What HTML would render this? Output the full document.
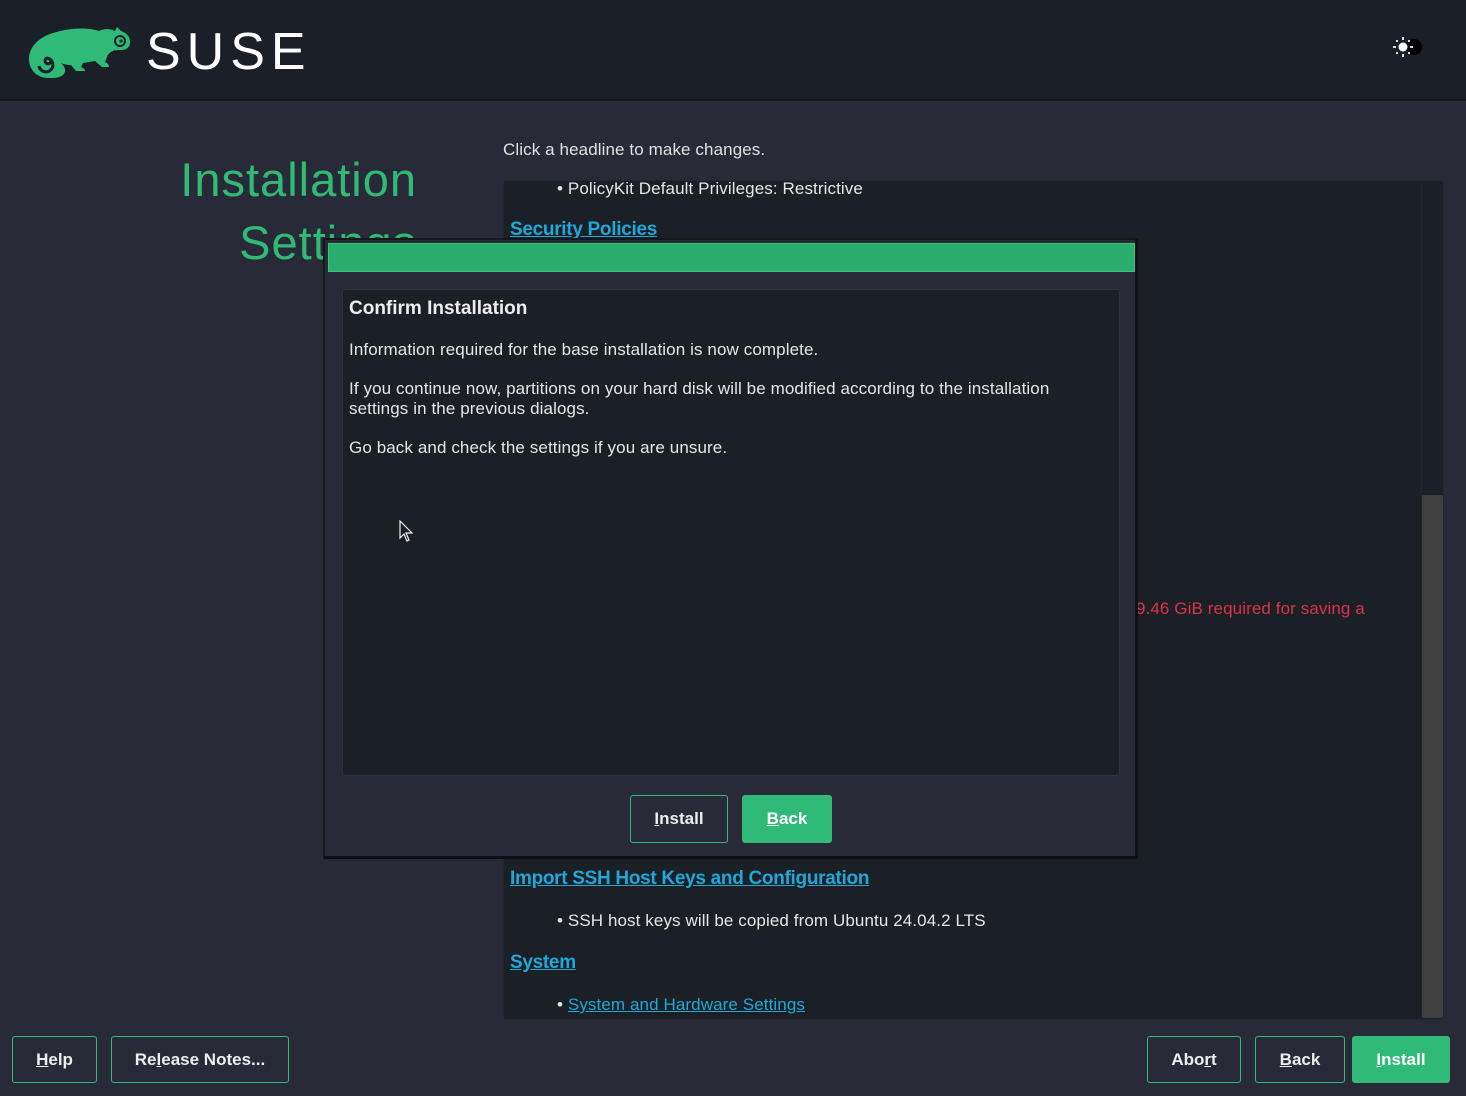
<!DOCTYPE html>
<html><head><meta charset="utf-8"><style>
*{margin:0;padding:0;box-sizing:border-box}
html,body{width:1466px;height:1096px;overflow:hidden;background:#282b37;font-family:"Liberation Sans",sans-serif;color:#e6e6e6}
.abs{position:absolute}
#hdr{left:0;top:0;width:1466px;height:101px;background:#1b1f27;border-bottom:2px solid #15181d}
.suse{left:146px;top:22px;font-size:52px;letter-spacing:6px;color:#fff;font-weight:normal}
.title{font-size:47px;color:#30ba78;right:1049px;text-align:right;white-space:nowrap;letter-spacing:1px}
.panel{left:503px;top:180px;width:941px;height:840px;background:#1b1f26;border:1px solid #22262e;border-radius:3px}
.sb{left:1421px;top:181px;width:22px;height:838px;background:#1b1f26;border-left:1px solid #22262e}
.thumb{left:1422px;top:495px;width:21px;height:523px;background:#404040;border-radius:2px}
.t16{font-size:17px;white-space:nowrap;letter-spacing:0.1px}
.link{color:#1fa8d8;font-size:19px;font-weight:bold;text-decoration:underline;white-space:nowrap;letter-spacing:-0.3px}
.btn{position:absolute;height:46px;border:1.5px solid #30ba78;border-radius:3px;background:#282b37;color:#eee;font-weight:bold;font-size:17px;display:flex;align-items:center;justify-content:center}
.btn.g{background:#30ba78;color:#fff}
.btn u{text-decoration:underline}
</style></head><body>
<div id="hdr" class="abs"></div>
<svg class="abs" style="left:29px;top:27px" width="102" height="52" viewBox="0 0 102 52">
<path fill="#30ba78" d="M20 51C8 51 0 43 0 32C0 20 10 10 24 6C40 1 58 0 70 4C76 1 82 2 86 4L88 0L92 4C98 6 101 10 101 15C101 21 97 23 92 23C86 23 80 24 78 30L76 35C78 36 80 37 80 40L73 40L66 34L54 36L52 40C54 41 56 42 56 44L47 44L42 38C38 38 34 37 32 36C36 40 38 44 34 48C30 51 26 51 20 51Z"/>
<path d="M22 34a3 3 0 1 1 -4 -3a7 7 0 1 1 -8 8" fill="none" stroke="#1b1f27" stroke-width="3"/>
<circle cx="91" cy="14" r="5" fill="none" stroke="#1b1f27" stroke-width="2"/>
<circle cx="92" cy="14" r="1.6" fill="#1b1f27"/>
<path d="M84 24Q92 27 99 22" stroke="#1b1f27" stroke-width="1.5" fill="none"/>
</svg>
<div class="abs suse">SUSE</div>
<svg class="abs" style="left:1392px;top:36px" width="36" height="24" viewBox="0 0 36 24">
<circle cx="22" cy="11" r="8" fill="#000"/>
<circle cx="11" cy="11" r="4.5" fill="#fff"/>
<g fill="#ddd"><rect x="10" y="1" width="2" height="3"/><rect x="10" y="18" width="2" height="3"/><rect x="1" y="10" width="3" height="2"/><rect x="18" y="10" width="3" height="2"/><rect x="4" y="4" width="2" height="2"/><rect x="16" y="4" width="2" height="2"/><rect x="4" y="16" width="2" height="2"/><rect x="16" y="16" width="2" height="2"/></g>
</svg>

<div class="abs title" style="top:152px">Installation</div>
<div class="abs title" style="top:215px">Settings</div>

<div class="abs t16" style="left:503px;top:140px;color:#e0e0e0">Click a headline to make changes.</div>
<div class="abs panel"></div>
<div class="abs sb"></div>
<div class="abs thumb"></div>
<div class="abs t16" style="left:557px;top:179px">• PolicyKit Default Privileges: Restrictive</div>
<div class="abs link" style="left:510px;top:219px">Security Policies</div>
<div class="abs t16" style="left:1136px;top:599px;color:#d8344c">9.46 GiB required for saving a</div>
<div class="abs link" style="left:510px;top:868px">Import SSH Host Keys and Configuration</div>
<div class="abs t16" style="left:557px;top:911px">• SSH host keys will be copied from Ubuntu 24.04.2 LTS</div>
<div class="abs link" style="left:510px;top:952px">System</div>
<div class="abs t16" style="left:557px;top:995px">• <span style="color:#1fa8d8;text-decoration:underline">System and Hardware Settings</span></div>

<div class="abs" style="left:323px;top:238px;width:815px;height:621px;background:#282b37;border:2px solid #15171b;border-right:3px solid #0e0f12;border-bottom:3px solid #0e0f12"></div>
<div class="abs" style="left:328px;top:243px;width:807px;height:29px;background:#2aad6e;border:1px solid #34c47f"></div>
<div class="abs" style="left:342px;top:289px;width:778px;height:487px;background:#1b1f26;border:1px solid #2e323b;border-radius:3px"></div>
<div class="abs" style="left:349px;top:298px;font-size:19px;font-weight:bold;color:#eee">Confirm Installation</div>
<div class="abs t16" style="left:349px;top:340px">Information required for the base installation is now complete.</div>
<div class="abs t16" style="left:349px;top:379px;line-height:20px">If you continue now, partitions on your hard disk will be modified according to the installation<br>settings in the previous dialogs.</div>
<div class="abs t16" style="left:349px;top:438px">Go back and check the settings if you are unsure.</div>
<svg class="abs" style="left:399px;top:520px" width="16" height="24" viewBox="0 0 16 24"><path d="M1 1L1 18L5 14L8 21L10 20L7 13L13 13Z" fill="#1b1f26" stroke="#eee" stroke-width="1.2"/></svg>

<div class="btn" style="left:630px;top:795px;width:98px;height:48px"><span><u>I</u>nstall</span></div>
<div class="btn g" style="left:742px;top:795px;width:90px;height:48px"><span><u>B</u>ack</span></div>

<div class="btn" style="left:12px;top:1036px;width:85px;height:47px"><span><u>H</u>elp</span></div>
<div class="btn" style="left:111px;top:1036px;width:178px;height:47px"><span>Re<u>l</u>ease Notes...</span></div>
<div class="btn" style="left:1147px;top:1036px;width:94px;height:47px"><span>Abo<u>r</u>t</span></div>
<div class="btn" style="left:1255px;top:1036px;width:90px;height:47px"><span><u>B</u>ack</span></div>
<div class="btn g" style="left:1352px;top:1036px;width:98px;height:47px"><span><u>I</u>nstall</span></div>
</body></html>
